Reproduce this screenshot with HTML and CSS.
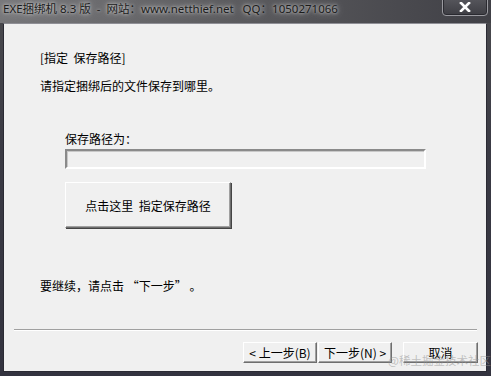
FILE: index.html
```html
<!DOCTYPE html>
<html lang="zh-CN">
<head>
    <meta charset="UTF-8">
    <title>EXE捆绑机 8.3 版</title>
    <link rel="stylesheet" href="styles.css">
</head>
<body>
    <div class="window">
        <div class="titlebar">
            <span class="title">EXE捆绑机 8.3 版 &nbsp;-&nbsp; 网站：www.netthief.net &nbsp; QQ：1050271066</span>
            <button class="close-btn">
                <svg width="14" height="10" viewBox="0 0 14 10">
                    <path d="M3 1 L11 9 M11 1 L3 9" stroke="#ffffff" stroke-width="2.6" stroke-linecap="square"/>
                </svg>
            </button>
        </div>

        <div class="client">
            <div class="content">
                <p class="heading">[指定&nbsp; 保存路径]</p>
                <p class="desc">请指定捆绑后的文件保存到哪里。</p>

                <div class="path-group">
                    <label class="path-label">保存路径为：</label>
                    <div class="path-input"></div>
                    <button class="pick-btn">点击这里&nbsp; 指定保存路径</button>
                </div>

                <p class="hint">要继续，请点击 “下一步” 。</p>
            </div>

            <hr class="separator">

            <div class="footer">
                <button class="nav-btn">&lt; 上一步(B)</button>
                <button class="nav-btn">下一步(N) &gt;</button>
                <button class="nav-btn cancel">取消</button>
                <span class="watermark">@稀土掘金技术社区</span>
            </div>
        </div>
    </div>
</body>
</html>
```

FILE: styles.css
```css
/* === Base === */
body {
    margin: 0;
    width: 491px;
    height: 376px;
    overflow: hidden;
    font-family: "Noto Sans CJK SC", "DejaVu Sans", sans-serif;
    font-size: 12px;
    color: #000;
    background: #3b3b46;
}

p {
    margin: 0;
}

/* === Window frame === */
.window {
    display: flex;
    flex-direction: column;
    width: 491px;
    height: 376px;
    box-sizing: border-box;
    padding: 0 4px 4px 3px;
    background: linear-gradient(to bottom, #4a4a4e 0%, #3a3a44 40%, #33333f 100%);
}

.titlebar {
    position: relative;
    height: 23px;
    display: flex;
    align-items: flex-start;
    background: linear-gradient(to right, #77777a 0%, #5d5d60 45%, #404046 100%);
    margin: 0 -4px 0 -3px;
    padding-left: 3px;
}

.title {
    font-family: "Noto Sans", "Noto Sans CJK SC", sans-serif;
    font-size: 11.5px;
    line-height: 18px;
    color: #1b1b1b;
    text-shadow: 0 0 6px #c8c8c8, 0 0 3px #d0d0d0;
    white-space: nowrap;
}

.close-btn {
    position: absolute;
    top: -2px;
    right: 3px;
    width: 46px;
    height: 18px;
    border: 1px solid #9a9aa0;
    border-radius: 0 0 4px 4px;
    background: linear-gradient(to bottom, #56565c, #3e3e44);
    box-shadow: inset 0 0 0 1px #2a2a30;
    display: flex;
    align-items: center;
    justify-content: center;
    padding: 0;
}

/* === Client area === */
.client {
    flex: 1;
    position: relative;
    background: #f0f0f0;
    border: 1px solid #2a2a33;
    border-top-color: #8f8f96;
    display: flex;
    flex-direction: column;
}

.content {
    flex: 1;
    padding: 26px 0 0 36px;
}

.heading {
    line-height: 16px;
    height: 16px;
}

.desc {
    margin-top: 12px;
    line-height: 16px;
}

.path-group {
    margin: 37px 0 0 25px;
    display: flex;
    flex-direction: column;
    align-items: flex-start;
}

.path-label {
    line-height: 16px;
}

.path-input {
    margin-top: 2px;
    width: 357px;
    height: 16px;
    background: #f0f0f0;
    border: 2px solid;
    border-color: #8a8a8a #ffffff #ffffff #8a8a8a;
    box-shadow: inset 1px 1px 0 #c8c8c8;
}

.pick-btn {
    margin-top: 13px;
    width: 166px;
    height: 46px;
    font: inherit;
    background: #f0f0f0;
    border: 1px solid;
    border-color: #ffffff #6e6e6e #6e6e6e #ffffff;
    box-shadow: inset -1px -1px 0 #a0a0a0, 1px 1px 0 #444;
    padding: 0;
}

.hint {
    margin-top: 50px;
    line-height: 16px;
}

/* === Footer === */
.separator {
    margin: 0 9px 0 10px;
    border: none;
    border-top: 1px solid #a0a0a0;
    border-bottom: 1px solid #ffffff;
    height: 0;
}

.footer {
    height: 40px;
    display: flex;
    align-items: flex-start;
    padding: 11px 0 0 239px;
    box-sizing: border-box;
    position: relative;
}

.nav-btn {
    width: 74px;
    height: 21px;
    font: inherit;
    font-size: 12px;
    line-height: 17px;
    padding: 0;
    background: #f0f0f0;
    border: 1px solid;
    border-color: #ffffff #6e6e6e #6e6e6e #ffffff;
    box-shadow: inset -1px -1px 0 #a0a0a0;
}

.nav-btn + .nav-btn {
    margin-left: 1px;
}

.nav-btn.cancel {
    margin-left: 11px;
    width: 75px;
}

.watermark {
    position: absolute;
    left: 384px;
    top: 21px;
    font-size: 11.5px;
    color: rgba(150, 150, 150, 0.55);
    white-space: nowrap;
    pointer-events: none;
}
```
